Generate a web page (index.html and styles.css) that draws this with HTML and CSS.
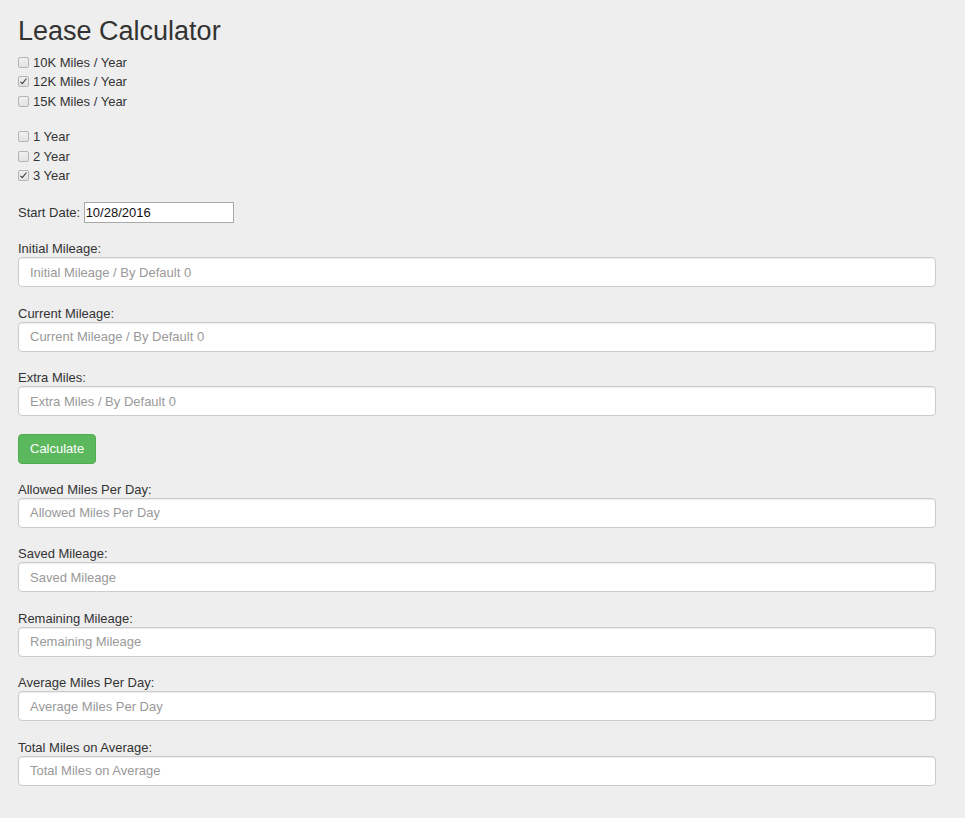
FILE: index.html
```html
<!DOCTYPE html>
<html lang="en">
<head>
<meta charset="utf-8">
<title>Lease Calculator</title>
<link rel="stylesheet" href="styles.css">
</head>
<body>
<div class="container">
  <h1 class="title">Lease Calculator</h1>

  <div class="check-group">
    <label class="check"><input type="checkbox"> 10K Miles / Year</label>
    <label class="check"><input type="checkbox" checked> 12K Miles / Year</label>
    <label class="check"><input type="checkbox"> 15K Miles / Year</label>
  </div>

  <div class="check-group second">
    <label class="check"><input type="checkbox"> 1 Year</label>
    <label class="check"><input type="checkbox"> 2 Year</label>
    <label class="check"><input type="checkbox" checked> 3 Year</label>
  </div>

  <div class="date-row">Start Date: <input class="date-input" type="text" value="10/28/2016"></div>

  <div class="form-group">
    <label class="field-label">Initial Mileage:</label>
    <input class="field" type="text" placeholder="Initial Mileage / By Default 0">
  </div>
  <div class="form-group">
    <label class="field-label">Current Mileage:</label>
    <input class="field" type="text" placeholder="Current Mileage / By Default 0">
  </div>
  <div class="form-group">
    <label class="field-label">Extra Miles:</label>
    <input class="field" type="text" placeholder="Extra Miles / By Default 0">
  </div>

  <button class="btn-calc" type="button">Calculate</button>

  <div class="form-group">
    <label class="field-label">Allowed Miles Per Day:</label>
    <input class="field" type="text" placeholder="Allowed Miles Per Day">
  </div>
  <div class="form-group">
    <label class="field-label">Saved Mileage:</label>
    <input class="field" type="text" placeholder="Saved Mileage">
  </div>
  <div class="form-group">
    <label class="field-label">Remaining Mileage:</label>
    <input class="field" type="text" placeholder="Remaining Mileage">
  </div>
  <div class="form-group">
    <label class="field-label">Average Miles Per Day:</label>
    <input class="field" type="text" placeholder="Average Miles Per Day">
  </div>
  <div class="form-group">
    <label class="field-label">Total Miles on Average:</label>
    <input class="field" type="text" placeholder="Total Miles on Average">
  </div>
</div>
</body>
</html>
```
FILE: styles.css
```css
html, body {
  margin: 0;
  padding: 0;
  background: #eeeeee;
}
body {
  font-family: "Liberation Sans", Arial, Helvetica, sans-serif;
  font-size: 13px;
  color: #333333;
}
.container {
  padding: 17px 29px 20px 18px;
}
.title {
  margin: 0 0 6px 0;
  font-size: 27px;
  font-weight: 500;
  line-height: 29.7px;
  color: #333;
}
.check-group {
  display: flex;
  flex-direction: column;
}
.check-group.second {
  margin-top: 16px;
}
.check {
  display: flex;
  align-items: center;
  height: 19.5px;
  line-height: 19.5px;
}
.check input {
  -webkit-appearance: none;
  appearance: none;
  width: 11px;
  height: 11px;
  margin: 0 4px 0 0;
  border: 1px solid #b4b4b4;
  border-radius: 2px;
  background: linear-gradient(#f0f0f0, #e2e2e2);
  position: relative;
  box-sizing: border-box;
}
.check input:checked::after {
  content: "";
  position: absolute;
  left: 3px;
  top: 0px;
  width: 2px;
  height: 6px;
  border: solid #333;
  border-width: 0 1.5px 1.5px 0;
  transform: rotate(40deg);
}
.date-row {
  margin-top: 16px;
  height: 21px;
  display: flex;
  align-items: center;
}
.date-input {
  margin-left: 3.5px;
  width: 150px;
  height: 21px;
  box-sizing: border-box;
  border: 1px solid #a9a9a9;
  padding: 0 1px;
  font-family: "Liberation Sans", Arial, sans-serif;
  font-size: 13px;
  color: #111;
  background: #fff;
}
.date-row + .form-group {
  margin-top: 17.5px;
}
.form-group {
  margin-bottom: 17.5px;
}
.field-label {
  display: block;
  line-height: 17px;
  margin-bottom: 0;
}
.field {
  display: block;
  width: 100%;
  height: 30px;
  box-sizing: border-box;
  padding: 0 11px;
  border: 1px solid #cccccc;
  border-radius: 4px;
  background: #fff;
  box-shadow: inset 0 1px 1px rgba(0,0,0,0.075);
  font-family: "Liberation Sans", Arial, sans-serif;
  font-size: 13px;
  color: #555;
}
.field::placeholder {
  color: #999999;
}
.btn-calc {
  display: block;
  margin: 0.5px 0 17px 0;
  height: 30px;
  padding: 0 11px;
  border: 1px solid #4cae4c;
  border-radius: 4px;
  background: #5cb85c;
  color: #fff;
  font-family: "Liberation Sans", Arial, sans-serif;
  font-size: 13px;
}
```
